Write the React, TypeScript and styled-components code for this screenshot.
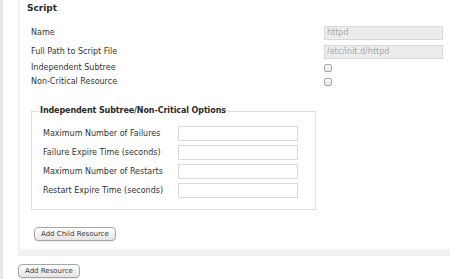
import React from "react";
import styled, { createGlobalStyle } from "styled-components";

const GlobalStyle = createGlobalStyle`
  html, body {
    margin: 0;
    padding: 0;
    background: #ffffff;
  }
  body {
    font-family: "DejaVu Sans", "Liberation Sans", sans-serif;
    font-size: 8px;
    color: #333333;
  }
`;

type FieldRow = {
  label: string;
  kind: "text" | "check";
  value?: string;
};

const scriptRows: FieldRow[] = [
  { label: "Name", kind: "text", value: "httpd" },
  { label: "Full Path to Script File", kind: "text", value: "/etc/init.d/httpd" },
  { label: "Independent Subtree", kind: "check" },
  { label: "Non-Critical Resource", kind: "check" },
];

const optionRows = [
  "Maximum Number of Failures",
  "Failure Expire Time (seconds)",
  "Maximum Number of Restarts",
  "Restart Expire Time (seconds)",
];

export default function App() {
  return (
    <>
      <GlobalStyle />
      <Shell>
        <ResourcePanel>
          <ResourceBody>
            <Heading>Script</Heading>
            <Form>
              {scriptRows.map((row) => (
                <Row key={row.label} $tall={row.kind === "text"}>
                  <Label $width={293}>{row.label}</Label>
                  {row.kind === "text" ? (
                    <ReadOnlyInput value={row.value} readOnly />
                  ) : (
                    <Checkbox type="checkbox" />
                  )}
                </Row>
              ))}

              <Options>
                <Legend>Independent Subtree/Non-Critical Options</Legend>
                {optionRows.map((label) => (
                  <Row key={label} $tall>
                    <Label $width={135}>{label}</Label>
                    <OptionInput />
                  </Row>
                ))}
              </Options>
            </Form>
            <ChildButton>Add Child Resource</ChildButton>
          </ResourceBody>
        </ResourcePanel>
        <Button>Add Resource</Button>
      </Shell>
    </>
  );
}

const Shell = styled.div`
  display: flex;
  flex-direction: column;
  align-items: flex-start;
  min-height: 279px;
  padding-left: 15px;
  border-left: 3px solid #e8e8ea;
  box-sizing: border-box;
`;

const ResourcePanel = styled.div`
  align-self: stretch;
  background: #f2f2f2;
  padding: 0 0 7px 2px;
`;

const ResourceBody = styled.div`
  display: flex;
  flex-direction: column;
  align-items: flex-start;
  background: #ffffff;
  padding: 2px 0 8px 7px;
`;

const Heading = styled.div`
  font-size: 9px;
  font-weight: bold;
  line-height: 12px;
  color: #2a2a2a;
  margin-bottom: 9px;
`;

const Form = styled.div`
  display: flex;
  flex-direction: column;
  padding-left: 4px;
`;

const Row = styled.div<{ $tall?: boolean }>`
  display: flex;
  align-items: center;
  height: ${({ $tall }) => ($tall ? "19px" : "14px")};
`;

const Label = styled.span<{ $width: number }>`
  width: ${({ $width }) => $width}px;
  flex-shrink: 0;
  line-height: 10px;
  white-space: nowrap;
`;

const ReadOnlyInput = styled.input`
  box-sizing: border-box;
  width: 119px;
  height: 14px;
  margin: 0;
  padding: 0 2px;
  border: 1px solid #d9d9d9;
  background: #ececec;
  color: #a8a8a8;
  font-family: "DejaVu Sans", sans-serif;
  font-size: 8px;
  outline: none;
`;

const Checkbox = styled.input`
  appearance: none;
  box-sizing: border-box;
  width: 8px;
  height: 8px;
  margin: 0;
  border: 1px solid #a9a9a9;
  border-radius: 2px;
  background: linear-gradient(#fafafa, #e2e2e2);
`;

const Options = styled.fieldset`
  box-sizing: border-box;
  width: 285px;
  margin: 17px 0 0 0;
  padding: 8px 0 9px 11px;
  border: 1px solid #dddddd;
`;

const Legend = styled.legend`
  font-weight: bold;
  font-size: 8px;
  letter-spacing: -0.1px;
  line-height: 10px;
  padding: 0 1px;
  margin-left: -4px;
  color: #2a2a2a;
`;

const OptionInput = styled.input`
  box-sizing: border-box;
  width: 120px;
  height: 15px;
  margin: 0;
  padding: 0 2px;
  border: 1px solid #d9d9d9;
  background: #ffffff;
  outline: none;
`;

const Button = styled.button`
  box-sizing: border-box;
  height: 14px;
  margin: 8px 0 0 0;
  padding: 0 6px;
  border: 1px solid #a6a6a6;
  border-radius: 4px;
  background: linear-gradient(#ffffff, #e4e4e4);
  box-shadow: 0 1px 0 rgba(0, 0, 0, 0.08);
  font-family: "DejaVu Sans", sans-serif;
  font-size: 7px;
  line-height: 12px;
  color: #3a3a3a;
`;

const ChildButton = styled(Button)`
  margin: 17px 0 0 7px;
`;
